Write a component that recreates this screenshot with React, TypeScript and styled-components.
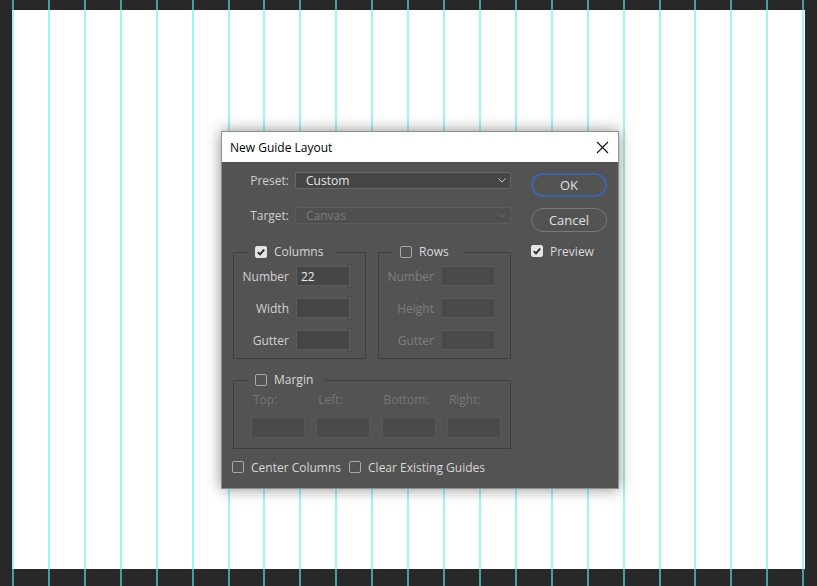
import { createGlobalStyle } from 'styled-components';
import styled from 'styled-components';

const GlobalStyle = createGlobalStyle`
  html, body {
    margin: 0;
    padding: 0;
    background: #282828;
  }
  * {
    box-sizing: border-box;
  }
`;

const GUIDE_STEP = '35.92px';

const Page = styled.div`
  position: relative;
  width: 817px;
  height: 586px;
  padding: 10px 0 0 12px;
  overflow: hidden;
  background-color: #282828;
  background-image: repeating-linear-gradient(
    to right,
    #469f9d 0 2px,
    transparent 2px ${GUIDE_STEP}
  );
  background-position: 12px 0;
  font-family: 'Open Sans', 'Noto Sans', sans-serif;
  font-size: 12px;
`;

const Canvas = styled.div`
  width: 793px;
  height: 559px;
  background-color: #ffffff;
  background-image: repeating-linear-gradient(
    to right,
    #a2f4f4 0 2px,
    transparent 2px ${GUIDE_STEP}
  );
`;

const Dialog = styled.div`
  position: absolute;
  left: 221px;
  top: 131px;
  width: 398px;
  height: 358px;
  display: flex;
  flex-direction: column;
  border: 1px solid #8e8e8e;
  background: #535353;
  box-shadow: 0 0 14px rgba(0, 0, 0, 0.45);
`;

const TitleBar = styled.div`
  height: 30px;
  display: flex;
  align-items: center;
  justify-content: space-between;
  padding: 0 9px 0 8px;
  background: #ffffff;
  color: #000000;
  font-size: 12px;
`;

const CloseButton = styled.div`
  width: 13px;
  height: 13px;
  display: flex;
`;

const Body = styled.div`
  flex: 1;
  display: flex;
  gap: 20px;
  padding: 0 0 0 11px;
`;

const LeftColumn = styled.div`
  width: 278px;
  display: flex;
  flex-direction: column;
`;

const RightColumn = styled.div`
  width: 76px;
  display: flex;
  flex-direction: column;
  padding-top: 11px;
  gap: 11px;
`;

const FormRow = styled.div<{ $top: number }>`
  display: flex;
  align-items: center;
  gap: 6px;
  height: 17px;
  margin-top: ${(p) => p.$top}px;
`;

const RowLabel = styled.span`
  width: 56px;
  text-align: right;
  color: #cecece;
`;

const SelectBox = styled.div<{ $disabled?: boolean }>`
  width: 216px;
  height: 17px;
  display: flex;
  align-items: center;
  justify-content: space-between;
  padding: 0 4px 0 10px;
  border: 1px solid ${(p) => (p.$disabled ? '#5c5c5c' : '#666666')};
  border-radius: 2px;
  background: ${(p) => (p.$disabled ? '#4f4f4f' : '#464646')};
  color: ${(p) => (p.$disabled ? '#7c7c7c' : '#e6e6e6')};
  line-height: 15px;
`;

const GroupRow = styled.div`
  display: flex;
  gap: 12px;
  margin-top: 20px;
`;

const Group = styled.fieldset<{ $width: number; $top?: number; $pt: number; $pb: number }>`
  width: ${(p) => p.$width}px;
  margin: ${(p) => p.$top ?? 0}px 0 0 0;
  padding: ${(p) => p.$pt}px 0 ${(p) => p.$pb}px 0;
  min-width: 0;
  border: 1px solid #3f3f3f;
  border-radius: 0;
`;

const Legend = styled.legend<{ $pr: number }>`
  display: flex;
  align-items: center;
  gap: 7px;
  height: 16px;
  margin-left: 13px;
  padding: 0 ${(p) => p.$pr}px 0 8px;
  color: #d8d8d8;
  line-height: 16px;
`;

const FieldList = styled.div`
  display: flex;
  flex-direction: column;
  gap: 12px;
`;

const Field = styled.div`
  display: flex;
  align-items: center;
  gap: 7px;
`;

const FieldLabel = styled.span<{ $disabled?: boolean }>`
  width: 55px;
  text-align: right;
  color: ${(p) => (p.$disabled ? '#7e7e7e' : '#d2d2d2')};
`;

const TextInput = styled.input<{ $h?: number }>`
  width: 54px;
  height: ${(p) => p.$h ?? 20}px;
  margin: 0;
  padding: 0 4px;
  border: 1px solid #5b5b5b;
  border-radius: 0;
  outline: none;
  background: #464646;
  color: #ececec;
  font-family: inherit;
  font-size: 12px;
  &:disabled {
    background: #4a4a4a;
    border-color: #575757;
  }
`;

const MarginGrid = styled.div`
  display: grid;
  grid-template-columns: repeat(4, 54px);
  column-gap: 11.3px;
  row-gap: 9px;
  padding: 0 0 2px 17px;
`;

const MarginLabel = styled.span`
  padding-left: 2px;
  color: #767676;
  line-height: 16px;
`;

const BottomRow = styled.div`
  display: flex;
  align-items: center;
  gap: 8px;
  margin: 10px 0 0 -1px;
`;

const CheckLabel = styled.label`
  display: flex;
  align-items: center;
  gap: 7px;
  height: 16px;
  color: #d8d8d8;
`;

const Box = styled.span<{ $checked?: boolean }>`
  width: 12px;
  height: 12px;
  display: flex;
  align-items: center;
  justify-content: center;
  border: 1px solid ${(p) => (p.$checked ? '#e4e4e4' : '#a9a9a9')};
  border-radius: 2px;
  background: ${(p) => (p.$checked ? '#e4e4e4' : 'transparent')};
`;

const PillButton = styled.button<{ $primary?: boolean }>`
  width: 76px;
  height: 24px;
  margin: 0;
  padding: 0;
  border: ${(p) => (p.$primary ? '2px solid #3f62a8' : '1px solid #787878')};
  border-radius: 12px;
  background: #535353;
  color: #e2e2e2;
  font-family: inherit;
  font-size: 13px;
  line-height: 20px;
`;

const Chevron = () => (
  <svg width="8" height="5" viewBox="0 0 8 5">
    <polyline points="0.5,0.5 4,4 7.5,0.5" fill="none" stroke="currentColor" strokeWidth="1" />
  </svg>
);

const Check = ({ checked }: { checked?: boolean }) => (
  <Box $checked={checked}>
    {checked && (
      <svg width="10" height="10" viewBox="0 0 10 10">
        <polyline points="1.8,5.2 4,7.4 8.2,2.6" fill="none" stroke="#2b2b2b" strokeWidth="1.9" />
      </svg>
    )}
  </Box>
);

const columnFields = [
  { label: 'Number', value: '22' },
  { label: 'Width', value: '' },
  { label: 'Gutter', value: '' },
];
const rowFields = ['Number', 'Height', 'Gutter'];
const marginFields = ['Top:', 'Left:', 'Bottom:', 'Right:'];

const App = () => {
  return (
    <>
      <GlobalStyle />
      <Page>
        <Canvas />
        <Dialog>
          <TitleBar>
            <span>New Guide Layout</span>
            <CloseButton>
              <svg width="13" height="13" viewBox="0 0 13 13">
                <path d="M1 1 L12 12 M12 1 L1 12" stroke="#111" strokeWidth="1.1" />
              </svg>
            </CloseButton>
          </TitleBar>
          <Body>
            <LeftColumn>
              <FormRow $top={10}>
                <RowLabel>Preset:</RowLabel>
                <SelectBox>
                  <span>Custom</span>
                  <span style={{ color: '#c8c8c8', display: 'flex' }}>
                    <Chevron />
                  </span>
                </SelectBox>
              </FormRow>
              <FormRow $top={18}>
                <RowLabel>Target:</RowLabel>
                <SelectBox $disabled>
                  <span>Canvas</span>
                  <span style={{ color: '#6a6a6a', display: 'flex' }}>
                    <Chevron />
                  </span>
                </SelectBox>
              </FormRow>
              <GroupRow>
                <Group $width={133} $pt={6} $pb={8}>
                  <Legend $pr={12}>
                    <Check checked />
                    <span>Columns</span>
                  </Legend>
                  <FieldList>
                    {columnFields.map((f) => (
                      <Field key={f.label}>
                        <FieldLabel>{f.label}</FieldLabel>
                        <TextInput defaultValue={f.value} />
                      </Field>
                    ))}
                  </FieldList>
                </Group>
                <Group $width={133} $pt={6} $pb={8}>
                  <Legend $pr={14}>
                    <Check />
                    <span>Rows</span>
                  </Legend>
                  <FieldList>
                    {rowFields.map((f) => (
                      <Field key={f}>
                        <FieldLabel $disabled>{f}</FieldLabel>
                        <TextInput disabled />
                      </Field>
                    ))}
                  </FieldList>
                </Group>
              </GroupRow>
              <Group $width={278} $top={13} $pt={4} $pb={8}>
                <Legend $pr={12}>
                  <Check />
                  <span>Margin</span>
                </Legend>
                <MarginGrid>
                  {marginFields.map((m) => (
                    <MarginLabel key={m}>{m}</MarginLabel>
                  ))}
                  {marginFields.map((m) => (
                    <TextInput key={m} $h={21} disabled />
                  ))}
                </MarginGrid>
              </Group>
              <BottomRow>
                <CheckLabel>
                  <Check />
                  <span>Center Columns</span>
                </CheckLabel>
                <CheckLabel>
                  <Check />
                  <span>Clear Existing Guides</span>
                </CheckLabel>
              </BottomRow>
            </LeftColumn>
            <RightColumn>
              <PillButton $primary>OK</PillButton>
              <PillButton>Cancel</PillButton>
              <CheckLabel>
                <Check checked />
                <span>Preview</span>
              </CheckLabel>
            </RightColumn>
          </Body>
        </Dialog>
      </Page>
    </>
  );
};

export default App;
